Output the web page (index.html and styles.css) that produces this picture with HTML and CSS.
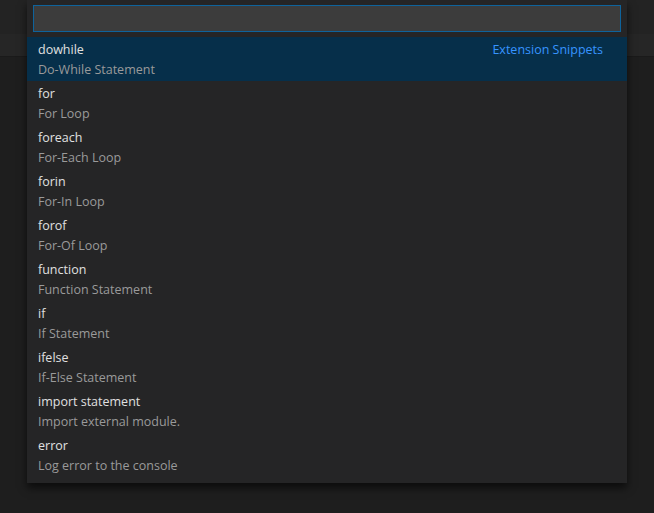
FILE: index.html
```html
<!DOCTYPE html>
<html>
<head>
<meta charset="utf-8">
<link rel="stylesheet" href="styles.css">
</head>
<body>
<div class="bg">
  <div class="band-top"></div>
  <div class="band-mid"></div>
</div>
<div class="picker">
  <div class="input-wrap"><div class="input"></div></div>
  <ul class="list">
    <li class="item selected"><div class="line"><span class="label">dowhile</span><span class="detail">Extension Snippets</span></div><div class="desc">Do-While Statement</div></li>
    <li class="item"><div class="line"><span class="label">for</span></div><div class="desc">For Loop</div></li>
    <li class="item"><div class="line"><span class="label">foreach</span></div><div class="desc">For-Each Loop</div></li>
    <li class="item"><div class="line"><span class="label">forin</span></div><div class="desc">For-In Loop</div></li>
    <li class="item"><div class="line"><span class="label">forof</span></div><div class="desc">For-Of Loop</div></li>
    <li class="item"><div class="line"><span class="label">function</span></div><div class="desc">Function Statement</div></li>
    <li class="item"><div class="line"><span class="label">if</span></div><div class="desc">If Statement</div></li>
    <li class="item"><div class="line"><span class="label">ifelse</span></div><div class="desc">If-Else Statement</div></li>
    <li class="item"><div class="line"><span class="label">import statement</span></div><div class="desc">Import external module.</div></li>
    <li class="item"><div class="line"><span class="label">error</span></div><div class="desc">Log error to the console</div></li>
  </ul>
</div>
</body>
</html>
```
FILE: styles.css
```css
html, body {
  margin: 0;
  padding: 0;
  width: 654px;
  height: 513px;
  overflow: hidden;
  background: #1e1e1e;
  font-family: "Segoe UI", "Open Sans", "Noto Sans", sans-serif;
}
.bg {
  position: absolute;
  left: 0; top: 0; right: 0;
}
.band-top {
  height: 34px;
  background: #232323;
}
.band-mid {
  height: 22px;
  background: #262626;
  border-bottom: 1px solid #1a1a1a;
}
.picker {
  position: absolute;
  left: 27px;
  top: 0;
  width: 600px;
  background: #252526;
  box-shadow: 0 5px 8px rgba(0,0,0,0.6);
  padding-bottom: 6px;
}
.input-wrap {
  padding: 5px 6px 5px 6px;
}
.input {
  height: 25px;
  background: #3c3c3c;
  border: 1px solid #0e639c;
}
.list {
  list-style: none;
  margin: 0;
  padding: 0;
}
.item {
  box-sizing: border-box;
  height: 44px;
  padding: 2px 24px 0 11px;
  display: flex;
  flex-direction: column;
  justify-content: center;
  font-size: 12.5px;
  line-height: 20px;
}
.item.selected {
  background: #062f4a;
}
.line {
  display: flex;
  justify-content: space-between;
}
.label {
  color: #e0e0e0;
}
.desc {
  color: #9a9a9a;
}
.detail {
  color: #3794ff;
}
```
